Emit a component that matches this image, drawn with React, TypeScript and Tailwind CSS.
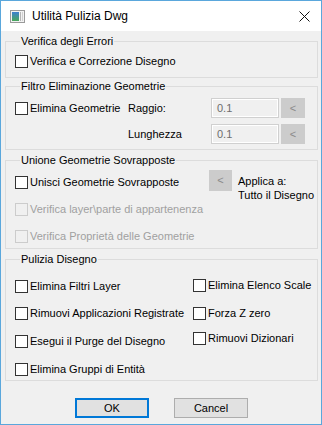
import React from 'react';

const font = { fontFamily: '"Liberation Sans", Arial, sans-serif' };

const Check: React.FC<{ label: string; disabled?: boolean }> = ({ label, disabled }) => (
  <div className="flex items-center h-[13px] gap-[2px]">
    <span
      className={
        disabled
          ? 'w-[13px] h-[13px] border border-[#cccccc] bg-[#f0f0f0] shrink-0'
          : 'w-[13px] h-[13px] border border-[#333333] bg-white shrink-0'
      }
    />
    <span className={disabled ? 'text-[#a0a0a0] whitespace-nowrap' : 'text-black whitespace-nowrap'}>{label}</span>
  </div>
);

const Group: React.FC<{ title: string; className?: string; children: React.ReactNode }> = ({ title, className, children }) => (
  <fieldset className={'border border-[#dcdcdc] ' + (className ?? '')}>
    <legend className="ml-[5px] px-[1px] leading-[13px] text-black">{title}</legend>
    {children}
  </fieldset>
);

const ArrowBtn: React.FC = () => (
  <div className="w-[24px] h-[20px] bg-[#cccccc] flex items-center justify-center text-[#8a8a8a] text-[11px]">&lt;</div>
);

const Field: React.FC = () => (
  <div className="w-[68px] h-[20px] border border-[#d0d0d0] shadow-[inset_0_0_0_1px_#ffffff] bg-[#f0f0f0] flex items-center pl-[5px] text-[#6d6d6d]">
    0.1
  </div>
);

export default function App() {
  return (
    <div className="w-[322px] h-[425px] border border-[#5aa7dc] flex flex-col text-[11px] bg-[#f0f0f0]" style={font}>
      {/* Title bar */}
      <div className="h-[30px] bg-white flex items-center shrink-0">
        <svg width="15" height="13" viewBox="0 0 15 13" className="ml-[9px]">
          <rect x="0.5" y="0.5" width="14" height="12" fill="#f2f2f2" stroke="#9a9a9a" />
          <defs>
            <linearGradient id="ig" x1="0" y1="0" x2="0" y2="1">
              <stop offset="0" stopColor="#3d7fd1" />
              <stop offset="1" stopColor="#49a85a" />
            </linearGradient>
          </defs>
          <rect x="2" y="2" width="7" height="9" fill="url(#ig)" />
          <rect x="10" y="2" width="1" height="9" fill="#b5b5b5" />
          <rect x="12" y="2" width="1" height="9" fill="#d0d0d0" />
        </svg>
        <span className="ml-[7px] text-[12px] text-black">Utilità Pulizia Dwg</span>
        <svg width="11" height="11" viewBox="0 0 11 11" className="ml-auto mr-[11px]">
          <path d="M0.5 0.5 L10.5 10.5 M10.5 0.5 L0.5 10.5" stroke="#111" strokeWidth="1" />
        </svg>
      </div>

      {/* Client area */}
      <div className="flex-1 pl-[4px] pr-[3px] flex flex-col">
        <Group title="Verifica degli Errori" className="mt-[4px] pl-[9px] pt-[7px] pb-[9px]">
          <Check label="Verifica e Correzione Disegno" />
        </Group>

        <Group title="Filtro Eliminazione Geometrie" className="mt-[2px] pl-[9px] pt-[5px] pb-[5px]">
          <div className="flex items-center h-[20px]">
            <div className="w-[113px]">
              <Check label="Elimina Geometrie" />
            </div>
            <div className="w-[83px]">Raggio:</div>
            <Field />
            <div className="ml-[2px]">
              <ArrowBtn />
            </div>
          </div>
          <div className="flex items-center h-[20px] mt-[6px]">
            <div className="w-[113px]" />
            <div className="w-[83px]">Lunghezza</div>
            <Field />
            <div className="ml-[2px]">
              <ArrowBtn />
            </div>
          </div>
        </Group>

        <Group title="Unione Geometrie Sovrapposte" className="mt-[4px] pl-[9px]">
          <div className="flex items-start">
            <div className="w-[194px] flex flex-col gap-[14px] pt-[9px] pb-[5px]">
              <Check label="Unisci Geometrie Sovrapposte" />
              <Check label="Verifica layer\parte di appartenenza" disabled />
              <Check label="Verifica Proprietà delle Geometrie" disabled />
            </div>
            <div className="mt-[3px] flex gap-[6px]">
              <div className="w-[23px] h-[21px] bg-[#cccccc] flex items-center justify-center text-[#8a8a8a] text-[11px]">&lt;</div>
              <div className="mt-[4px] leading-[14px] text-black whitespace-nowrap">
                <div>Applica a:</div>
                <div>Tutto il Disegno</div>
              </div>
            </div>
          </div>
        </Group>

        <Group title="Pulizia Disegno" className="mt-[4px] pl-[9px] pb-[4px]">
          <div className="flex items-start">
            <div className="w-[178px] flex flex-col">
              <div className="mt-[14px]"><Check label="Elimina Filtri Layer" /></div>
              <div className="mt-[14px]"><Check label="Rimuovi Applicazioni Registrate" /></div>
              <div className="mt-[15px]"><Check label="Esegui il Purge del Disegno" /></div>
              <div className="mt-[15px]"><Check label="Elimina Gruppi di Entità" /></div>
            </div>
            <div className="flex flex-col">
              <div className="mt-[13px]"><Check label="Elimina Elenco Scale" /></div>
              <div className="mt-[15px]"><Check label="Forza Z zero" /></div>
              <div className="mt-[12px]"><Check label="Rimuovi Dizionari" /></div>
            </div>
          </div>
        </Group>

        <div className="mt-[17px] flex justify-center gap-[25px]">
          <button className="w-[74px] h-[20px] border-2 border-[#0078d7] bg-[#e1e1e1] text-black text-[11px] flex items-center justify-center">
            OK
          </button>
          <button className="w-[74px] h-[20px] border border-[#adadad] bg-[#e1e1e1] text-black text-[11px] flex items-center justify-center">
            Cancel
          </button>
        </div>
      </div>
    </div>
  );
}
